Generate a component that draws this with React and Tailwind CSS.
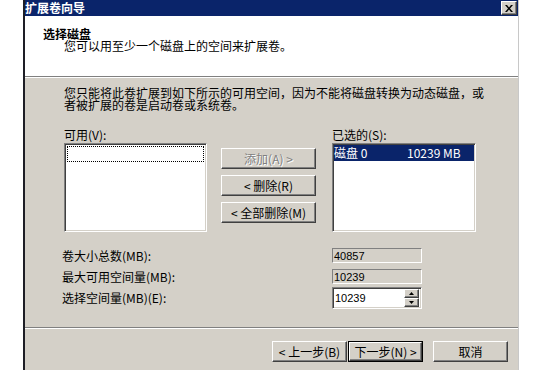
import React from "react";

const raised =
  "border border-t-white border-l-white border-r-[#404040] border-b-[#404040] bg-[#d4d0c8] shadow-[inset_-1px_-1px_#808080,inset_1px_1px_#d4d0c8]";
const sunken =
  "border border-t-[#808080] border-l-[#808080] border-r-white border-b-white shadow-[inset_1px_1px_#404040,inset_-1px_-1px_#d4d0c8]";

function Btn({ children, className = "", disabled, isDefault }) {
  const face = (
    <div
      className={`flex h-full w-full items-center justify-center whitespace-nowrap ${raised} ${
        disabled ? "text-[#808080] [text-shadow:1px_1px_0_#fff]" : "text-black"
      }`}
    >
      {children}
    </div>
  );
  if (isDefault) {
    return <div className={`border border-black ${className}`}>{face}</div>;
  }
  return <div className={className}>{face}</div>;
}

function ReadField({ value }) {
  return (
    <div className="flex h-[15px] w-[90px] items-center border border-t-[#808080] border-l-[#808080] border-r-white border-b-white bg-[#d4d0c8] pl-[1px] font-['Liberation_Sans',sans-serif] text-[11px]">
      {value}
    </div>
  );
}

function Arrow({ up }) {
  return (
    <svg width="5" height="3" viewBox="0 0 5 3">
      {up ? <path d="M2.5 0L5 3H0Z" fill="#000" /> : <path d="M0 0H5L2.5 3Z" fill="#000" />}
    </svg>
  );
}

export default function App() {
  return (
    <div className="min-h-screen bg-white font-['Noto_Sans_CJK_SC',sans-serif] text-[12px] leading-[12px] text-black">
      <div className="ml-[23px] flex h-[370px] w-[496px] flex-col border-l-2 border-r border-l-[#1e1e26] border-r-[#c8c8c8]">
        {/* Title bar */}
        <div className="flex h-[16px] items-center justify-between bg-[#0a246a] pr-[1px]">
          <span className="font-bold text-white">扩展卷向导</span>
          <div className={`flex h-[14px] w-[16px] items-center justify-center ${raised}`}>
            <svg width="8" height="7" viewBox="0 0 8 7">
              <path d="M0 0h2l2 2.5L6 0h2L5 3.5 8 7H6L4 4.5 2 7H0l3-3.5z" fill="#000" />
            </svg>
          </div>
        </div>

        {/* Header */}
        <div className="h-[60px] bg-white pl-[18px] pt-[11px]">
          <div className="font-bold leading-[13px]">选择磁盘</div>
          <div className="ml-[21px]">您可以用至少一个磁盘上的空间来扩展卷。</div>
        </div>
        <div className="h-[2px] border-t border-b border-t-[#808080] border-b-white" />

        {/* Body */}
        <div className="flex flex-1 flex-col bg-[#d4d0c8]">
          <div className="h-[249px] pl-[39px] pt-[9px]">
            <div className="whitespace-nowrap">
              您只能将此卷扩展到如下所示的可用空间，因为不能将磁盘转换为动态磁盘，或
            </div>
            <div className="whitespace-nowrap">者被扩展的卷是启动卷或系统卷。</div>

            <div className="mt-[18px] flex">
              <span className="w-[268px]">可用(V):</span>
              <span>已选的(S):</span>
            </div>

            <div className="mt-[2px] flex items-start">
              <div className={`h-[89px] w-[143px] bg-white p-[2px] ${sunken}`}>
                <div className="h-[16px] w-full border border-dotted border-black" />
              </div>
              <div className="ml-[14px] mt-[5px] flex w-[95px] flex-col gap-[6px]">
                <Btn disabled className="h-[21px]">添加(A) &gt;</Btn>
                <Btn className="h-[21px]">&lt; 删除(R)</Btn>
                <Btn className="h-[21px]">&lt; 全部删除(M)</Btn>
              </div>
              <div className={`ml-[16px] h-[89px] w-[144px] bg-white p-[1px] ${sunken}`}>
                <div className="flex h-[16px] items-center bg-[#0a246a] text-white">
                  <span className="w-[73px]">磁盘 0</span>
                  <span>10239 MB</span>
                </div>
              </div>
            </div>

            <div className="mt-[16px] flex items-center">
              <span className="-ml-[2px] w-[270px]">卷大小总数(MB):</span>
              <ReadField value="40857" />
            </div>
            <div className="mt-[6px] flex items-center">
              <span className="-ml-[2px] w-[270px]">最大可用空间量(MB):</span>
              <ReadField value="10239" />
            </div>
            <div className="mt-[3px] flex items-center">
              <span className="-ml-[2px] w-[270px]">选择空间量(MB)(E):</span>
              <div className={`flex h-[22px] w-[90px] items-center justify-between bg-white pl-[2px] pr-[2px] ${sunken}`}>
                <span className="font-['Liberation_Sans',sans-serif] text-[11px]">10239</span>
                <div className="flex flex-col">
                  <div className={`flex h-[9px] w-[15px] items-center justify-center ${raised}`}>
                    <Arrow up />
                  </div>
                  <div className={`flex h-[9px] w-[15px] items-center justify-center ${raised}`}>
                    <Arrow />
                  </div>
                </div>
              </div>
            </div>
          </div>

          <div className="h-[2px] border-t border-b border-t-[#808080] border-b-white" />

          <div className="flex justify-end pr-[10px] pt-[12px]">
            <Btn className="h-[21px] w-[75px]">&lt; 上一步(B)</Btn>
            <Btn isDefault className="ml-[1px] h-[21px] w-[75px]">下一步(N) &gt;</Btn>
            <Btn className="ml-[10px] h-[21px] w-[75px]">取消</Btn>
          </div>
        </div>
      </div>
    </div>
  );
}
